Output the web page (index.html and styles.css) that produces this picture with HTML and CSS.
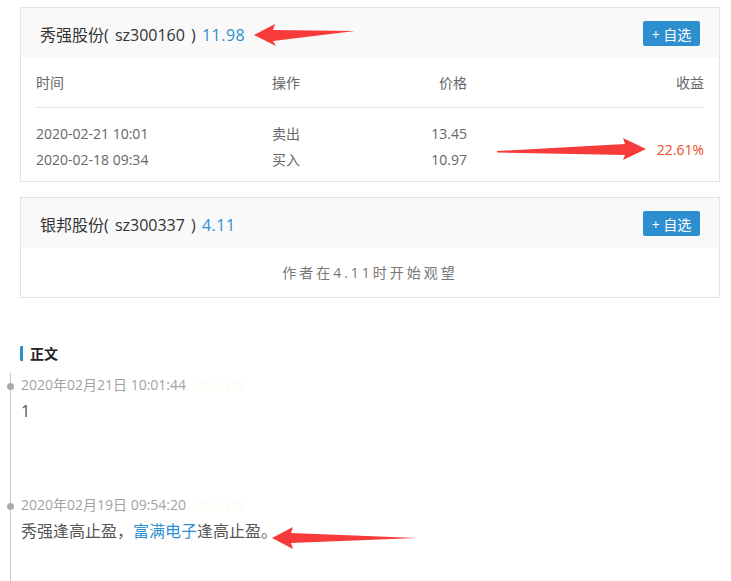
FILE: index.html
```html
<!DOCTYPE html>
<html lang="zh">
<head>
<meta charset="utf-8">
<title>持仓</title>
<link rel="stylesheet" href="styles.css">
</head>
<body>
<div class="page">
  <div class="card">
    <div class="card-head">
      <div class="title">秀强股份( sz300160 ) <span class="price">11.98</span></div>
      <button class="btn">+ 自选</button>
    </div>
    <div class="trades">
      <div class="th">时间</div>
      <div class="th">操作</div>
      <div class="th right">价格</div>
      <div class="th right">收益</div>
      <div class="td first">2020-02-21 10:01</div>
      <div class="td first">卖出</div>
      <div class="td first right">13.45</div>
      <div class="td profit">22.61%</div>
      <div class="td">2020-02-18 09:34</div>
      <div class="td">买入</div>
      <div class="td right">10.97</div>
    </div>
  </div>

  <div class="card second">
    <div class="card-head">
      <div class="title">银邦股份( sz300337 ) <span class="price">4.11</span></div>
      <button class="btn">+ 自选</button>
    </div>
    <div class="watch">作者在4.11时开始观望</div>
  </div>

  <div class="section-title">正文</div>

  <div class="timeline">
    <div class="item">
      <span class="dot"></span>
      <div class="date">2020年02月21日 10:01:44 <span class="faint">浏览 (0)</span></div>
      <div class="content">1</div>
    </div>
    <div class="item">
      <span class="dot"></span>
      <div class="date">2020年02月19日 09:54:20 <span class="faint">浏览 (0)</span></div>
      <div class="content">秀强逢高止盈，<span class="link">富满电子</span>逢高止盈。</div>
    </div>
  </div>
</div>

<svg class="arrows" width="731" height="581" viewBox="0 0 731 581" aria-hidden="true">
  <polygon points="254,35 275,24 273,30 355,31 273,41 276,46" />
  <polygon points="646,149 623,138 625,144 497,151 497,152.5 625,155 623,160" />
  <polygon points="272,538 293,527 291,533 417,538 291,543 293,549" />
</svg>
</body>
</html>
```

FILE: styles.css
```css
html, body {
  margin: 0;
  padding: 0;
  background: #fff;
}
body {
  font-family: "Segoe UI", "Open Sans", "Noto Sans CJK SC", sans-serif;
  color: #333;
  position: relative;
  width: 731px;
  height: 581px;
  overflow: hidden;
}
.page {
  padding: 7px 0 0 20px;
}
.card {
  width: 698px;
  border: 1px solid #e3e3e3;
  background: #fff;
}
.card.second {
  margin-top: 15px;
}
.card-head {
  height: 50px;
  background: #f9f9f9;
  display: flex;
  align-items: center;
  justify-content: space-between;
  padding: 0 19px 0 19px;
}
.title {
  font-size: 16px;
  color: #333;
  padding-top: 1px;
  word-spacing: 2px;
}
.price {
  color: #2e8fd2;
  letter-spacing: 0.5px;
}
.btn {
  height: 25px;
  width: 57px;
  border: 0;
  border-radius: 2px;
  background: #2d8fcf;
  color: #fff;
  font-family: inherit;
  font-size: 14px;
  padding: 0;
  margin-top: 1px;
}
.trades {
  margin: 0 15px;
  padding-bottom: 8px;
  display: grid;
  grid-template-columns: 236px 115px 80px 237px;
  font-size: 14px;
  color: #666;
}
.th {
  padding: 14px 0 13px;
  line-height: 22px;
  border-bottom: 1px solid #e3e3e3;
}
.td {
  line-height: 26px;
}
.td.first {
  padding-top: 13px;
}
.right {
  text-align: right;
}
.profit {
  grid-column: 4;
  grid-row: 2 / span 2;
  align-self: end;
  text-align: right;
  color: #ef4b26;
  line-height: 24px;
  padding-bottom: 11px;
}
.watch {
  height: 49px;
  line-height: 49px;
  text-align: center;
  font-size: 14px;
  color: #777;
  letter-spacing: 3px;
}
.section-title {
  margin-top: 48px;
  border-left: 3px solid #2d8fcf;
  border-radius: 1px;
  padding-left: 7px;
  line-height: 15px;
  font-size: 14px;
  font-weight: bold;
  color: #222;
}
.timeline {
  margin: 12px 0 0 -10px;
  border-left: 1px solid #c8c8c8;
  padding-left: 10px;
  height: 220px;
}
.item {
  position: relative;
  padding-top: 2px;
}
.item + .item {
  margin-top: 69px;
}
.dot {
  position: absolute;
  left: -14px;
  top: 10px;
  width: 7px;
  height: 7px;
  border-radius: 50%;
  background: #a9a9a9;
}
.date {
  font-size: 14px;
  line-height: 20px;
  color: #a3a3a3;
}
.faint {
  color: #fdfbf1;
  margin-left: 6px;
}
.content {
  margin-top: 3px;
  font-size: 16px;
  line-height: 26px;
  color: #555;
}
.link {
  color: #2e8fd2;
}
.arrows {
  position: absolute;
  left: 0;
  top: 0;
  pointer-events: none;
}
.arrows polygon {
  fill: #f73b3b;
}
```
